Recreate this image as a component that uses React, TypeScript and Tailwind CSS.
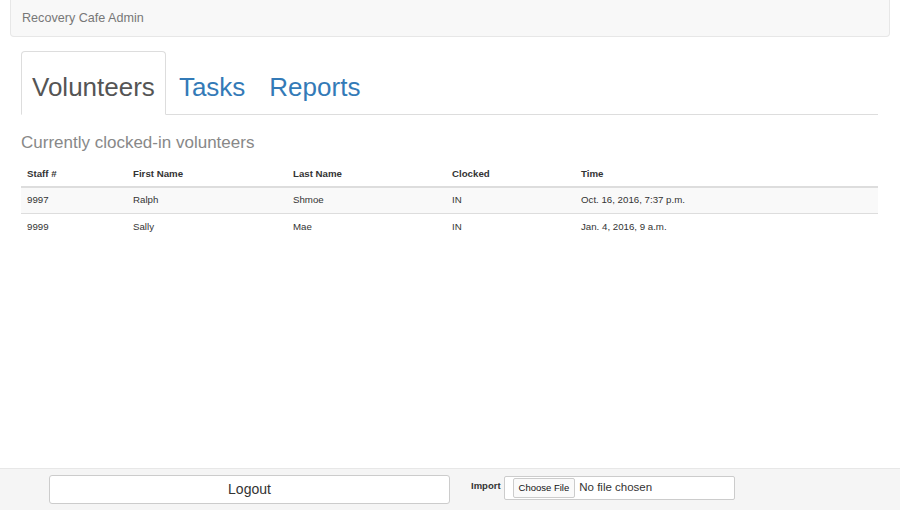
import React from "react"

const rows = [
  { staff: "9997", first: "Ralph", last: "Shmoe", clocked: "IN", time: "Oct. 16, 2016, 7:37 p.m." },
  { staff: "9999", first: "Sally", last: "Mae", clocked: "IN", time: "Jan. 4, 2016, 9 a.m." },
]

const cols = "grid grid-cols-[106px_160px_159px_129px_1fr]"

export default function App() {
  return (
    <div className="flex h-screen flex-col bg-white font-['Liberation_Sans',Arial,sans-serif] text-[#333]">
      {/* Navbar */}
      <nav className="mx-[10px] flex h-[37px] shrink-0 items-center rounded-b border border-t-0 border-[#e7e7e7] bg-[#f8f8f8] px-[11px]">
        <span className="text-[12.6px] text-[#777]">Recovery Cafe Admin</span>
      </nav>

      <main className="flex-1 px-[21px] pr-[22px]">
        {/* Tabs */}
        <ul className="mt-[14px] flex border-b border-[#ddd]">
          <li className="-mb-px mr-[2px] flex h-[64px] items-center rounded-t-[4px] border border-[#ddd] border-b-white bg-white px-[10px] pt-[9px]">
            <span className="text-[26px] text-[#555]">Volunteers</span>
          </li>
          <li className="mr-[2px] flex h-[63px] items-center px-[11px] pt-[9px]">
            <span className="text-[26px] text-[#337ab7]">Tasks</span>
          </li>
          <li className="flex h-[63px] items-center px-[11px] pt-[9px]">
            <span className="text-[26px] text-[#337ab7]">Reports</span>
          </li>
        </ul>

        <h3 className="mt-[17px] text-[17px] leading-[22px] text-[#888]">Currently clocked-in volunteers</h3>

        {/* Table */}
        <div className="mt-[8px] text-[9.7px]">
          <div className={`${cols} h-[26px] items-center border-b-2 border-[#ddd] font-bold`}>
            <div className="px-[6px]">Staff #</div>
            <div className="px-[6px]">First Name</div>
            <div className="px-[6px]">Last Name</div>
            <div className="px-[6px]">Clocked</div>
            <div className="px-[6px]">Time</div>
          </div>
          {rows.map((r, i) => (
            <div
              key={r.staff}
              className={`${cols} h-[26px] items-center ${i === 0 ? "border-b border-[#ddd] bg-[#f9f9f9]" : "bg-white"}`}
            >
              <div className="px-[6px]">{r.staff}</div>
              <div className="px-[6px]">{r.first}</div>
              <div className="px-[6px]">{r.last}</div>
              <div className="px-[6px]">{r.clocked}</div>
              <div className="px-[6px]">{r.time}</div>
            </div>
          ))}
        </div>
      </main>

      {/* Footer */}
      <footer className="flex h-[42px] shrink-0 items-start border-t border-[#e7e7e7] bg-[#f5f5f5] pl-[49px] pt-[6px]">
        <button className="h-[29px] w-[401px] rounded-[3px] border border-[#ccc] bg-white text-[14px] text-[#333]">
          Logout
        </button>
        <div className="ml-[21px] flex items-start">
          <span className="mr-[3px] mt-[4px] text-[9.5px] font-bold">Import</span>
          <div className="mt-[1px] flex h-[24px] w-[231px] items-center rounded-[2px] border border-[#ccc] bg-white pl-[8px]">
            <span className="rounded-[2px] border border-[#ccc] bg-[#fafafa] px-[5px] py-[2px] text-[9.5px] text-[#111]">
              Choose File
            </span>
            <span className="ml-[4px] text-[11.5px] text-[#333]">No file chosen</span>
          </div>
        </div>
      </footer>
    </div>
  )
}
